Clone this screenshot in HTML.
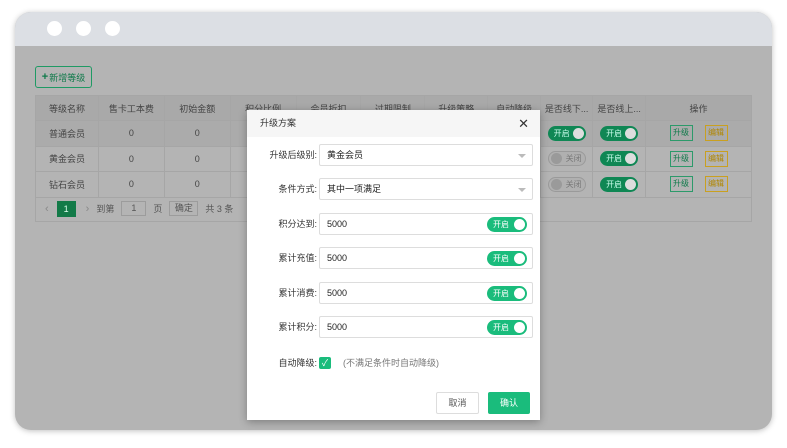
<!DOCTYPE html>
<html><head><meta charset="utf-8"><style>
*{box-sizing:border-box;margin:0;padding:0}
body{width:787px;height:448px;background:#fff;font-family:"Liberation Sans","Noto Sans CJK SC",sans-serif;font-size:9px;color:#333;position:relative;overflow:hidden}
.frame{position:absolute;left:15px;top:12px;width:757px;height:418px;border-radius:16px;overflow:hidden;background:#b4b4b4;box-shadow:0 1px 6px rgba(0,0,0,.25)}
.bar{height:34px;background:#dcdfe4;position:relative}
.dot{position:absolute;top:9px;width:15px;height:15px;border-radius:50%;background:#fff}
.abs{position:absolute}
.addbtn{left:35px;top:66px;width:57px;height:22px;border:1px solid #1f9a64;border-radius:3px;color:#0f7a4a;font-size:9px;display:flex;align-items:center;justify-content:center;background:#b4b4b4}
table{position:absolute;left:35px;top:95px;width:717px;border-collapse:collapse;font-size:9px;color:#444}
td{border:1px solid #a6a6a6;text-align:center;height:25.5px;white-space:nowrap;overflow:hidden}
tr.h td{background:#a9a9a9;height:25px}
tr.r1 td{background:#ababab}
.sw{display:inline-block;width:38px;height:15px;border-radius:8px;background:#0f8754;color:#cfe;position:relative;font-size:8px;line-height:15px;text-align:left;padding-left:6px;vertical-align:middle}
.sw::after{content:"";position:absolute;right:2px;top:2px;width:11px;height:11px;border-radius:50%;background:#ddd}
.off{background:#b0b0b0;border:1px solid #9a9a9a;color:#777;padding-left:17px;line-height:13px}
.off::after{left:2px;top:1px;background:#9a9a9a}
.ob{display:inline-block;width:23px;height:16px;border:1px solid #2c9a6a;color:#0f7a4a;font-size:8px;line-height:14px;margin:0 6px;vertical-align:middle}
.ob.y{border-color:#c9a020;color:#b08600}
.pager{position:absolute;left:35px;top:196px;width:717px;height:26px;border:1px solid #a6a6a6;border-top:none;display:flex;align-items:center;color:#555;font-size:9px}
.modal{position:absolute;left:247px;top:110px;width:293px;height:310px;background:#fff;box-shadow:0 2px 8px rgba(0,0,0,.3)}
.mh{height:27px;background:#f6f6f6;font-size:9px;color:#333;padding-left:13px;line-height:27px;position:relative}
.x{position:absolute;right:11px;top:0;font-size:13px;color:#333}
.lbl{position:absolute;right:223px;font-size:9px;line-height:12px;color:#333;text-align:right;white-space:nowrap}
.inp{position:absolute;left:72px;width:214px;height:22px;border:1px solid #ddd;border-radius:2px;font-size:9px;line-height:20px;padding-left:7px;color:#222}
.caret{position:absolute;right:6px;top:9px;border:4px solid transparent;border-top:4px solid #bbb}
.gs{position:absolute;right:5px;top:3px;width:40px;height:15px;border-radius:8px;background:#1abc7c;color:#fff;font-size:8px;line-height:15px;padding-left:6px}
.gs::after{content:"";position:absolute;right:2px;top:2px;width:11px;height:11px;border-radius:50%;background:#fff}
</style></head><body>
<div class="frame"><div class="bar"><div class="dot" style="left:32px"></div><div class="dot" style="left:61px"></div><div class="dot" style="left:90px"></div></div></div>
<div class="abs addbtn"><b style="font-size:11px;margin-right:1px">+</b>新增等级</div>
<table>
<colgroup><col style="width:63px"><col style="width:66px"><col style="width:66px"><col style="width:66px"><col style="width:65px"><col style="width:64px"><col style="width:63px"><col style="width:53px"><col style="width:52px"><col style="width:53px"><col style="width:106px"></colgroup>
<tr class="h"><td>等级名称</td><td>售卡工本费</td><td>初始金额</td><td>积分比例</td><td>会员折扣</td><td>过期限制</td><td>升级策略</td><td>自动降级</td><td>是否线下...</td><td>是否线上...</td><td>操作</td></tr>
<tr class="r1"><td>普通会员</td><td>0</td><td>0</td><td></td><td></td><td></td><td></td><td></td><td><span class="sw">开启</span></td><td><span class="sw">开启</span></td><td><span class="ob">升级</span><span class="ob y">编辑</span></td></tr>
<tr><td>黄金会员</td><td>0</td><td>0</td><td></td><td></td><td></td><td></td><td></td><td><span class="sw off">关闭</span></td><td><span class="sw">开启</span></td><td><span class="ob">升级</span><span class="ob y">编辑</span></td></tr>
<tr><td>钻石会员</td><td>0</td><td>0</td><td></td><td></td><td></td><td></td><td></td><td><span class="sw off">关闭</span></td><td><span class="sw">开启</span></td><td><span class="ob">升级</span><span class="ob y">编辑</span></td></tr>
</table>
<div class="pager"><span style="margin-left:9px;font-size:11px;color:#888">‹</span><span style="margin-left:8px;width:19px;height:16px;background:#137a48;color:#dfe;text-align:center;line-height:16px">1</span><span style="margin-left:10px;font-size:11px;color:#888">›</span><span style="margin-left:7px">到第</span><span style="margin-left:7px;width:25px;height:15px;border:1px solid #9c9c9c;text-align:center;line-height:13px">1</span><span style="margin-left:7px">页</span><span style="margin-left:7px;width:29px;height:15px;border:1px solid #9c9c9c;text-align:center;line-height:13px">确定</span><span style="margin-left:7px">共 3 条</span></div>
<div class="modal">
<div class="mh">升级方案<span class="x">✕</span></div>
<div class="lbl" style="top:39px">升级后级别:</div><div class="inp" style="top:34px">黄金会员<span class="caret"></span></div>
<div class="lbl" style="top:73px">条件方式:</div><div class="inp" style="top:68px">其中一项满足<span class="caret"></span></div>
<div class="lbl" style="top:108px">积分达到:</div><div class="inp" style="top:103px">5000<span class="gs">开启</span></div>
<div class="lbl" style="top:142px">累计充值:</div><div class="inp" style="top:137px">5000<span class="gs">开启</span></div>
<div class="lbl" style="top:177px">累计消费:</div><div class="inp" style="top:172px">5000<span class="gs">开启</span></div>
<div class="lbl" style="top:211px">累计积分:</div><div class="inp" style="top:206px">5000<span class="gs">开启</span></div>
<div class="lbl" style="top:247px">自动降级:</div>
<div class="abs" style="left:72px;top:247px;width:12px;height:12px;background:#1abc7c;border-radius:2px;color:#fff;font-size:9px;line-height:12px;text-align:center">✓</div>
<div class="abs" style="left:96px;top:247px;color:#777;font-size:9px;line-height:12px">(不满足条件时自动降级)</div>
<div class="abs" style="left:189px;top:282px;width:43px;height:22px;border:1px solid #ddd;border-radius:2px;text-align:center;line-height:20px;color:#555">取消</div>
<div class="abs" style="left:241px;top:282px;width:42px;height:22px;background:#1abc7c;border-radius:2px;text-align:center;line-height:22px;color:#fff">确认</div>
</div>
</body></html>
